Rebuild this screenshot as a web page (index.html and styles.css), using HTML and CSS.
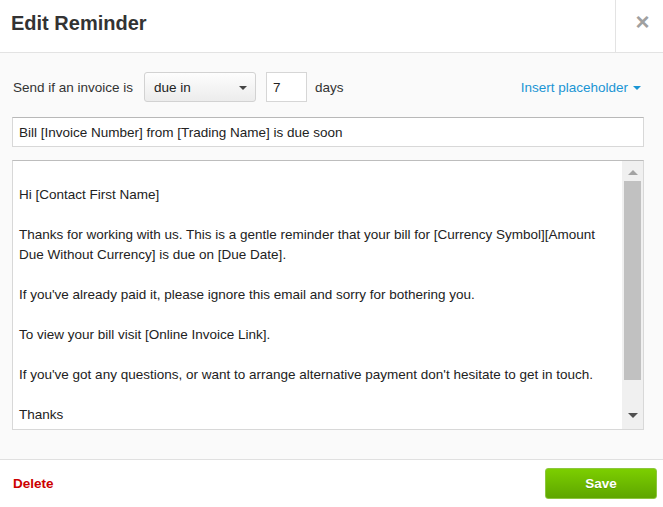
FILE: index.html
```html
<!DOCTYPE html>
<html lang="en">
<head>
    <meta charset="UTF-8">
    <meta name="viewport" content="width=device-width, initial-scale=1.0">
    <title>Edit Reminder</title>
    <link rel="stylesheet" href="styles.css">
</head>
<body>
    <div class="modal">
        <div class="modal-header">
            <h2>Edit Reminder</h2>
            <button class="close" type="button">&times;</button>
        </div>

        <div class="modal-body">
            <div class="send-row">
                <span class="label">Send if an invoice is</span>
                <div class="select">
                    <span>due in</span>
                    <span class="caret"></span>
                </div>
                <input type="text" class="days-input" value="7">
                <span class="label days">days</span>
                <a href="#" class="placeholder-link">Insert placeholder <span class="caret caret-blue"></span></a>
            </div>

            <input type="text" class="subject" value="Bill [Invoice Number] from [Trading Name] is due soon">

            <div class="editor">
                <div class="editor-content">
                    <p>&nbsp;</p>
                    <p>Hi [Contact First Name]</p>
                    <p>&nbsp;</p>
                    <p>Thanks for working with us. This is a gentle reminder that your bill for [Currency Symbol][Amount Due Without Currency] is due on [Due Date].</p>
                    <p>&nbsp;</p>
                    <p>If you've already paid it, please ignore this email and sorry for bothering you.</p>
                    <p>&nbsp;</p>
                    <p>To view your bill visit [Online Invoice Link].</p>
                    <p>&nbsp;</p>
                    <p>If you've got any questions, or want to arrange alternative payment don't hesitate to get in touch.</p>
                    <p>&nbsp;</p>
                    <p>Thanks</p>
                </div>
                <div class="scrollbar">
                    <span class="arrow arrow-up"></span>
                    <div class="thumb"></div>
                    <span class="arrow arrow-down"></span>
                </div>
            </div>
        </div>

        <div class="modal-footer">
            <a href="#" class="delete">Delete</a>
            <button class="save" type="button">Save</button>
        </div>
    </div>
</body>
</html>
```

FILE: styles.css
```css
body {
    margin: 0;
    font-family: "Liberation Sans", Arial, sans-serif;
    font-size: 13.5px;
    color: #222;
    background: #fafafa;
}
.modal {
    display: flex;
    flex-direction: column;
    height: 507px;
}
.modal-header {
    display: flex;
    align-items: center;
    height: 52px;
    background: white;
    border-bottom: 1px solid #e3e3e3;
}
.modal-header h2 {
    flex: 1;
    margin: 0 0 5px;
    padding-left: 11px;
    font-size: 20px;
    font-weight: bold;
    color: #333;
}
.close {
    width: 48px;
    height: 52px;
    border: none;
    border-left: 1px solid #e3e3e3;
    background: white;
    color: #a0a0a0;
    font-family: "Liberation Sans", Arial, sans-serif;
    font-size: 24px;
    font-weight: bold;
    padding: 0 0 9px 6px;
}
.modal-body {
    flex: 1;
    padding: 19px 19px 0 12px;
}
.send-row {
    display: flex;
    align-items: center;
    height: 30px;
    padding-bottom: 1px;
}
.label {
    color: #333;
    margin-left: 1px;
    margin-right: 11px;
}
.select {
    display: flex;
    align-items: center;
    justify-content: space-between;
    box-sizing: border-box;
    width: 112px;
    height: 30px;
    padding: 0 8px 0 9px;
    border: 1px solid #d2d2d2;
    border-radius: 3px;
    background: linear-gradient(#fdfdfd, #ececec);
}
.caret {
    width: 0;
    height: 0;
    border-left: 4px solid transparent;
    border-right: 4px solid transparent;
    border-top: 4px solid #444;
    margin-top: 2px;
}
.days-input {
    box-sizing: border-box;
    width: 41px;
    height: 30px;
    margin-left: 10px;
    padding: 0 6px;
    border: 1px solid #d6d6d6;
    font: inherit;
    color: #222;
}
.days {
    margin-left: 8px;
}
.placeholder-link {
    margin-left: auto;
    color: #1a95d4;
    text-decoration: none;
    display: flex;
    align-items: center;
    gap: 5px;
    margin-right: 3px;
}
.caret-blue {
    border-top-color: #1a95d4;
}
.subject {
    display: block;
    box-sizing: border-box;
    width: 100%;
    height: 30px;
    margin-top: 14px;
    padding: 0 6px;
    border: 1px solid #d8d8d8;
    border-top-color: #b8b8b8;
    font: inherit;
    color: #222;
    background: white;
}
.editor {
    display: flex;
    box-sizing: border-box;
    height: 270px;
    margin-top: 13px;
    border: 1px solid #d8d8d8;
    border-top-color: #bdbdbd;
    background: white;
}
.editor-content {
    flex: 1;
    overflow: hidden;
    padding: 4px 6px 0;
    line-height: 20px;
}
.editor-content p {
    margin: 0;
}
.scrollbar {
    display: flex;
    flex-direction: column;
    align-items: center;
    width: 21px;
    background: #f0f0f0;
}
.arrow {
    width: 0;
    height: 0;
    border-left: 5px solid transparent;
    border-right: 5px solid transparent;
}
.arrow-up {
    border-bottom: 5px solid #a3a3a3;
    margin: 9px 0 6px;
}
.arrow-down {
    border-top: 5px solid #505050;
    margin: 33px 0 8px;
}
.thumb {
    width: 17px;
    height: 199px;
    background: #c1c1c1;
}
.modal-footer {
    display: flex;
    align-items: center;
    justify-content: space-between;
    height: 47px;
    background: white;
    border-top: 1px solid #e0e0e0;
    padding: 0 6px 0 13px;
}
.delete {
    color: #cc0000;
    font-weight: bold;
    text-decoration: none;
}
.save {
    width: 112px;
    height: 31px;
    border: 1px solid #8cc63e;
    border-radius: 3px;
    background: linear-gradient(#7cce00, #5ea600);
    color: white;
    font: inherit;
    font-weight: bold;
    text-shadow: 0 1px 0 rgba(0, 0, 0, 0.15);
    cursor: pointer;
}
```
